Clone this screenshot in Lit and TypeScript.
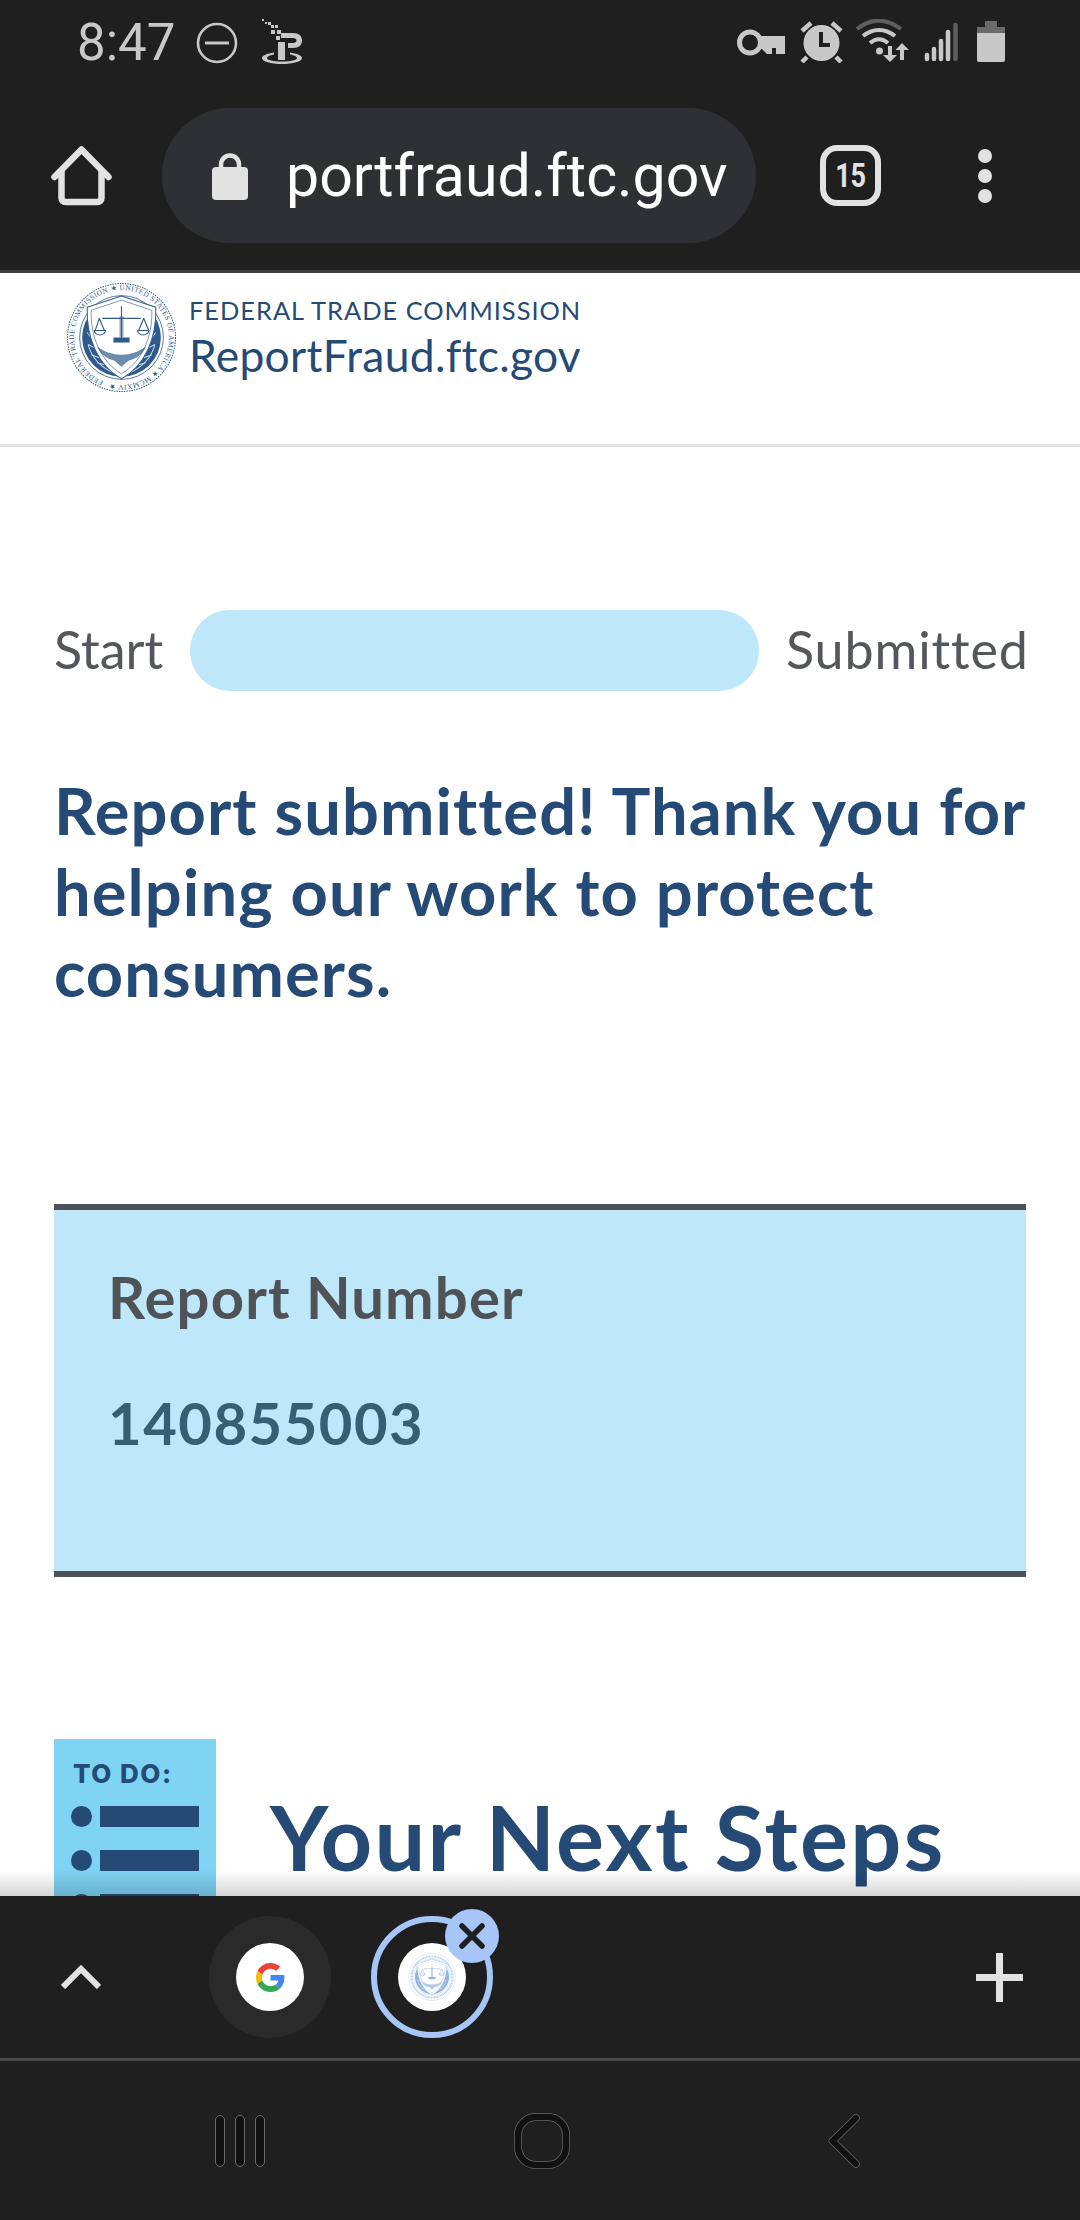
import { LitElement, html, css, svg } from "lit";
import { customElement } from "lit/decorators.js";

const seal = (size: number, c: string, id: string, withText: boolean) => html`
<svg width=${size} height=${size} viewBox="0 0 110 110">
  <circle cx="55" cy="55" r="53.5" fill="#fff" stroke=${c} stroke-width="1" stroke-dasharray="1.5 1"/>
  <circle cx="55" cy="55" r="39" fill=${c}/>
  <circle cx="55" cy="55" r="41.5" fill="none" stroke=${c} stroke-width=".8"/>
  ${withText ? svg`<defs><path id=${id} d="M37 98.400a47 47 0 1 1 36 0a47 47 0 0 1-36 0"/></defs>
  <text font-family="Liberation Serif, serif" font-size="7.2" fill=${c}><textPath href="#${id}" textLength="288">FEDERAL TRADE COMMISSION ★ UNITED STATES OF AMERICA ★ MCMXIV ★</textPath></text>` : svg`<circle cx="55" cy="55" r="47" fill="none" stroke=${c} stroke-width="5" stroke-dasharray="2 1.5" opacity=".7"/>`}
  <g stroke="#fff" stroke-width="1" fill="none" opacity=".75">
    <path d="M22 62c3 12 12 22 25 28M88 62c-3 12-12 22-25 28"/>
    <path d="M21 50l6 8M22 62l8 4M25 72l8 3M31 80l7 2M89 50l-6 8M88 62l-8 4M85 72l-8 3M79 80l-7 2"/>
  </g>
  <path d="M21 25 L55 14 L89 25 C90 56 78 83 55 96 C32 83 20 56 21 25Z" fill="#fff" stroke=${c} stroke-width="1"/>
  <path d="M25 28 L55 18 L85 28 C86 55 75 79 55 91 C35 79 24 55 25 28Z" fill="#fff" stroke=${c} stroke-width=".6"/>
  <g fill="none" stroke=${c} stroke-width="1.1">
    <path d="M55 24V55M36 36H74M33 36L29 48M33 36L38 48M77 36L72 48M77 36L82 48"/>
    <path d="M28 48a5.500 4.500 0 0 0 11 0ZM71 48a5.500 4.500 0 0 0 11 0Z"/>
  </g>
  <path d="M47 55h16v5H47z" fill=${c}/>
  <path d="M53 34h4v21h-4z" fill=${c} opacity=".5"/>
  <path d="M31 64c8 6 15 8 24 8s16-2 24-8c-3 9-12 13-17 14l-7 6-7-6c-5-1-14-5-17-14Z" fill=${c} opacity=".7"/>
</svg>`;

@customElement("app-root")
export class AppRoot extends LitElement {
  static styles = css`
    :host { display: block; width: 1080px; height: 2220px; font-family: "Lato", "Liberation Sans", sans-serif; font-variant-ligatures: none; }
    .page { width: 1080px; height: 2220px; display: flex; flex-direction: column; background: #fff; overflow: hidden; }
    svg { display: block; flex: none; }

    .chrome { height: 270px; background: #1f1f1f; border-bottom: 3px solid #3e3e3e; flex: none; }
    .status { height: 108px; box-sizing: border-box; padding: 19px 0 0 77px; display: flex; align-items: flex-start; color: #c8c8c8; }
    .time { font: 400 51px/48px Roboto, sans-serif; width: 98px; height: 48px; white-space: nowrap; }
    .dnd { margin: 3px 0 0 21px; }
    .ip { margin: 0 0 0 23px; }
    .status-right { margin-left: auto; margin-right: 74px; }
    .toolbar { height: 135px; display: flex; align-items: center; padding-left: 51px; }
    .pill { margin-left: 50px; width: 594px; height: 135px; border-radius: 68px; background: #2e3033; display: flex; align-items: center; box-sizing: border-box; padding-left: 50px; flex: none; }
    .url { margin-left: 38px; font: 400 59px/70px Roboto, sans-serif; color: #fff; white-space: nowrap; }
    .tabs { margin-left: 64px; width: 61px; height: 61px; box-sizing: border-box; border: 6px solid #e2e2e2; border-radius: 17px; display: flex; align-items: center; justify-content: center; color: #e2e2e2; flex: none; }
    .tabs span { display: block; font: 700 33px/34px Roboto, sans-serif; transform: scaleX(.82); letter-spacing: -.5px; }
    .dots { margin-left: 97px; display: flex; flex-direction: column; gap: 6px; }
    .dots i { display: block; width: 14px; height: 14px; border-radius: 50%; background: #e2e2e2; }

    .site { box-sizing: border-box; height: 174px; padding: 9px 0 0 66px; border-bottom: 3px solid #e4e4e4; display: flex; flex: none; }
    .site-text { margin: 15px 0 0 12px; color: #254a75; white-space: nowrap; }
    .ftc { font-size: 25.4px; line-height: 26px; letter-spacing: 1px; }
    .rf { font-size: 44.4px; line-height: 52px; margin-top: 6px; letter-spacing: .3px; }

    .main { flex: 1; min-height: 0; overflow: hidden; position: relative; padding: 0 54px; }
    .progress { margin-top: 163px; display: grid; grid-template-columns: 108px 569px 240px; column-gap: 27.5px; height: 81px; align-items: center; color: #54575b; font-size: 52px; line-height: 58px; }
    .lab { padding-bottom: 3px; white-space: nowrap; }
    .bar { height: 81px; border-radius: 40px; background: #bee8f9; }
    .lab-r { text-align: right; letter-spacing: .9px; }
    h1 { margin: 79px 0 0; font-size: 65px; line-height: 81px; font-weight: 700; color: #254a75; letter-spacing: 1.1px; width: 990px; }
    .box { margin-top: 191px; height: 373px; box-sizing: border-box; background: #bee8f9; border-top: 6px solid #4f5358; border-bottom: 6px solid #4f5358; padding: 57px 0 0 54px; }
    .box-l { font-size: 58px; line-height: 60px; font-weight: 700; color: #4f5358; letter-spacing: 1.15px; white-space: nowrap; }
    .box-n { margin-top: 66px; font-size: 58px; line-height: 60px; font-weight: 700; color: #365f73; letter-spacing: 1.5px; }
    .todo-row { margin-top: 162px; display: flex; gap: 54px; }
    .todo { width: 162px; height: 180px; flex: none; box-sizing: border-box; background: #7fd3f3; padding: 21px 0 0 17px; color: #254a75; }
    .todo-t { font: 800 26px/28px Inter, sans-serif; margin-left: 2px; white-space: nowrap; letter-spacing: 1.5px; }
    .todo-i { display: flex; align-items: center; gap: 8px; height: 21px; margin-top: 23px; }
    .todo-t + .todo-i { margin-top: 18px; }
    .todo-i i { width: 21px; height: 21px; border-radius: 50%; background: #254a75; }
    .todo-i b { display: block; width: 99px; height: 21px; background: #254a75; }
    h2 { margin: 47px 0 0; font-size: 90px; line-height: 100px; font-weight: 700; color: #254a75; white-space: nowrap; letter-spacing: 2.3px; }
    .shade { position: absolute; left: 0; right: 0; bottom: 0; height: 26px; background: linear-gradient(rgba(0,0,0,0), rgba(0,0,0,.16)); }

    .bottom { height: 165px; box-sizing: border-box; flex: none; background: #1f1f1f; border-bottom: 3px solid #4a4a4a; display: flex; align-items: center; padding-left: 61px; }
    .fav { width: 122px; height: 122px; border-radius: 50%; box-sizing: border-box; display: flex; align-items: center; justify-content: center; position: relative; flex: none; }
    .fav.g { margin-left: 108px; background: #2a2a2a; }
    .fav.a { margin-left: 40px; border: 6px solid #a6c6f7; }
    .disc { width: 68px; height: 68px; border-radius: 50%; background: #fff; display: flex; align-items: center; justify-content: center; }
    .close { position: absolute; left: 68px; top: -13px; width: 54px; height: 54px; border-radius: 50%; background: #a6c6f7; display: flex; align-items: center; justify-content: center; }
    .plus { margin-left: auto; margin-right: 57px; }

    .nav { height: 159px; flex: none; background: #1f1f1f; display: flex; align-items: center; padding-left: 215px; }
    .nav-home { margin-left: 249px; }
    .nav-back { margin-left: 258px; }
  `;

  render() {
    return html`<div class="page">
      <div class="chrome">
        <div class="status">
          <div class="time">8:47</div>
          <svg class="dnd" width="42" height="42" viewBox="0 0 42 42"><circle cx="21" cy="21" r="19" fill="none" stroke="#c8c8c8" stroke-width="2.600"/><path d="M9 21h24" stroke="#c8c8c8" stroke-width="3"/></svg>
          <svg class="ip" width="42" height="46" viewBox="0 0 42 46" fill="#c8c8c8">
            <path d="M1 0h2v2H1zM4 3h2v2H4zM7 3h3v3H7zM10 6h3v3h-3zM14 6h3v3h-3zM10 11h4v4h-4zM16 11h4v4h-4zM15 17h4v4h-4z"/>
            <path d="M20 14h12c6 0 9 3 9 7.500S38 29 32 29h-5v-5h5c2 0 3.500-1 3.500-2.500S34 19 32 19H20z"/>
            <path d="M17 23h7v18h-7z"/>
            <path d="M13 33.500C6 34.500 1 36.500 1 39c0 3.500 9 6 20 6s20-2.500 20-6c0-2.500-5-4.500-12-5.500v2c4 .7 7 2 7 3.500 0 2-6 3.500-15 3.500S6 41 6 39c0-1.500 3-2.800 7-3.500z"/>
          </svg>
          <svg class="status-right" width="269" height="44" viewBox="737 19 269 44">
            <circle cx="750" cy="42.500" r="10.500" fill="none" stroke="#c8c8c8" stroke-width="5"/>
            <path d="M759 36h26v18h-9v-6h-4v6h-5l-5-5h-3v-3h2z" fill="#c8c8c8"/>
            <g stroke="#c8c8c8" fill="none" stroke-width="4.500">
              <path d="M802 31l9-8M841 31l-9-8M807 57l-5 5M836 57l5 5" />
            </g>
            <circle cx="821.500" cy="43" r="18" fill="#c8c8c8"/>
            <path d="M821 32v13h9" stroke="#1f1f1f" stroke-width="4" fill="none"/>
            <g fill="none" stroke="#c8c8c8" stroke-width="4">
              <path d="M857 29C871 18 886 18 901 29" stroke="#5e5e5e"/>
              <path d="M863 36C873 28 885 28 895 36"/>
              <path d="M870 43C876 38 882 38 888 43"/>
            </g>
            <circle cx="879.500" cy="51" r="3.500" fill="#c8c8c8"/>
            <path d="M888 46h4v9h5l-7 7-7-7h5zM904 60h-4v-10h-4.500l6.500-7 7 7h-5z" fill="#c8c8c8"/>
            <g stroke-linecap="round" stroke-width="4.500" stroke="#c8c8c8">
              <path d="M927 55v4M934 49v10M941 41v18M948 32v27"/>
              <path d="M955.500 25v34" stroke="#5e5e5e"/>
            </g>
            <path d="M985 21h12v6h8v6h-28v-6h8z" fill="#6a6a6a"/>
            <path d="M977 33h28v27a2 2 0 0 1-2 2h-24a2 2 0 0 1-2-2z" fill="#c8c8c8"/>
          </svg>
        </div>
        <div class="toolbar">
          <svg width="61" height="61" viewBox="0 0 61 61" fill="none" stroke="#e2e2e2" stroke-width="6.500" stroke-linejoin="round" stroke-linecap="round"><path d="M3.500 32L30.500 4.500 57.500 32"/><path d="M10.500 26V53a4 4 0 0 0 4 4h32a4 4 0 0 0 4-4V26" stroke-linecap="butt"/></svg>
          <div class="pill">
            <svg width="36" height="48" viewBox="0 0 36 48"><path d="M9 22V12.500a9 9 0 0 1 18 0V22" fill="none" stroke="#e2e2e2" stroke-width="4.500"/><rect y="15" width="36" height="33" rx="4" fill="#e2e2e2"/></svg>
            <div class="url">portfraud.ftc.gov</div>
          </div>
          <div class="tabs"><span>15</span></div>
          <div class="dots"><i></i><i></i><i></i></div>
        </div>
      </div>

      <div class="site">
        ${seal(111, "#2f5a8c", "sealA", true)}
        <div class="site-text">
          <div class="ftc">FEDERAL TRADE COMMISSION</div>
          <div class="rf">ReportFraud.ftc.gov</div>
        </div>
      </div>

      <div class="main">
        <div class="progress">
          <div class="lab">Start</div><div class="bar"></div><div class="lab lab-r">Submitted</div>
        </div>
        <h1>Report submitted! Thank you for helping our work to protect consumers.</h1>
        <div class="box">
          <div class="box-l">Report Number</div>
          <div class="box-n">140855003</div>
        </div>
        <div class="todo-row">
          <div class="todo">
            <div class="todo-t">TO DO:</div>
            <div class="todo-i"><i></i><b></b></div>
            <div class="todo-i"><i></i><b></b></div>
            <div class="todo-i"><i></i><b></b></div>
          </div>
          <h2>Your Next Steps</h2>
        </div>
        <div class="shade"></div>
      </div>

      <div class="bottom">
        <svg width="40" height="24" viewBox="0 0 40 24" fill="none" stroke="#e2e2e2" stroke-width="6"><path d="M2 22L20 4 38 22"/></svg>
        <div class="fav g"><div class="disc">
          <svg width="29" height="29" viewBox="0 0 48 48">
            <path fill="#EA4335" d="M24 9.500c3.540 0 6.710 1.220 9.210 3.600l6.850-6.850C35.900 2.380 30.470 0 24 0 14.620 0 6.510 5.380 2.560 13.220l7.980 6.190C12.430 13.720 17.740 9.500 24 9.500z"/>
            <path fill="#4285F4" d="M46.980 24.550c0-1.570-.15-3.090-.38-4.550H24v9.020h12.940c-.58 2.960-2.260 5.480-4.780 7.180l7.730 6c4.510-4.180 7.090-10.360 7.090-17.650z"/>
            <path fill="#FBBC05" d="M10.530 28.590c-.48-1.450-.76-2.990-.76-4.590s.27-3.140.76-4.590l-7.980-6.190C.92 16.460 0 20.120 0 24c0 3.880.92 7.540 2.560 10.780l7.970-6.190z"/>
            <path fill="#34A853" d="M24 48c6.480 0 11.930-2.130 15.890-5.810l-7.730-6c-2.150 1.450-4.920 2.300-8.160 2.300-6.260 0-11.570-4.220-13.470-9.910l-7.980 6.190C6.510 42.620 14.620 48 24 48z"/>
          </svg>
        </div></div>
        <div class="fav a">
          <div class="disc">${seal(48, "#8fb2de", "sealB", false)}</div>
          <div class="close"><svg width="26" height="26" viewBox="0 0 26 26" stroke="#1f1f1f" stroke-width="5.500" stroke-linecap="round"><path d="M3 3l20 20M23 3L3 23"/></svg></div>
        </div>
        <svg class="plus" width="47" height="49" viewBox="0 0 47 49" fill="#e2e2e2"><path d="M20 0h7v21h20v7H27v21h-7V28H0v-7h20z"/></svg>
      </div>

      <div class="nav">
        <svg width="50" height="52" viewBox="0 0 50 52" fill="#111" stroke="#6a6a6a" stroke-width="1"><rect x=".5" y=".5" width="9" height="51" rx="4.500"/><rect x="20.500" y=".5" width="9" height="51" rx="4.500"/><rect x="40.500" y=".5" width="9" height="51" rx="4.500"/></svg>
        <svg class="nav-home" width="56" height="56" viewBox="0 0 56 56"><rect x="4" y="4" width="48" height="48" rx="18" fill="none" stroke="#6a6a6a" stroke-width="8"/><rect x="4" y="4" width="48" height="48" rx="18" fill="none" stroke="#111" stroke-width="6.500"/></svg>
        <svg class="nav-back" width="32" height="54" viewBox="0 0 32 54" fill="none" stroke-linecap="round" stroke-linejoin="round"><path d="M28 4L4.500 27 28 50" stroke="#6a6a6a" stroke-width="7.500"/><path d="M28 4L4.500 27 28 50" stroke="#111" stroke-width="6"/></svg>
      </div>
    </div>`;
  }
}
